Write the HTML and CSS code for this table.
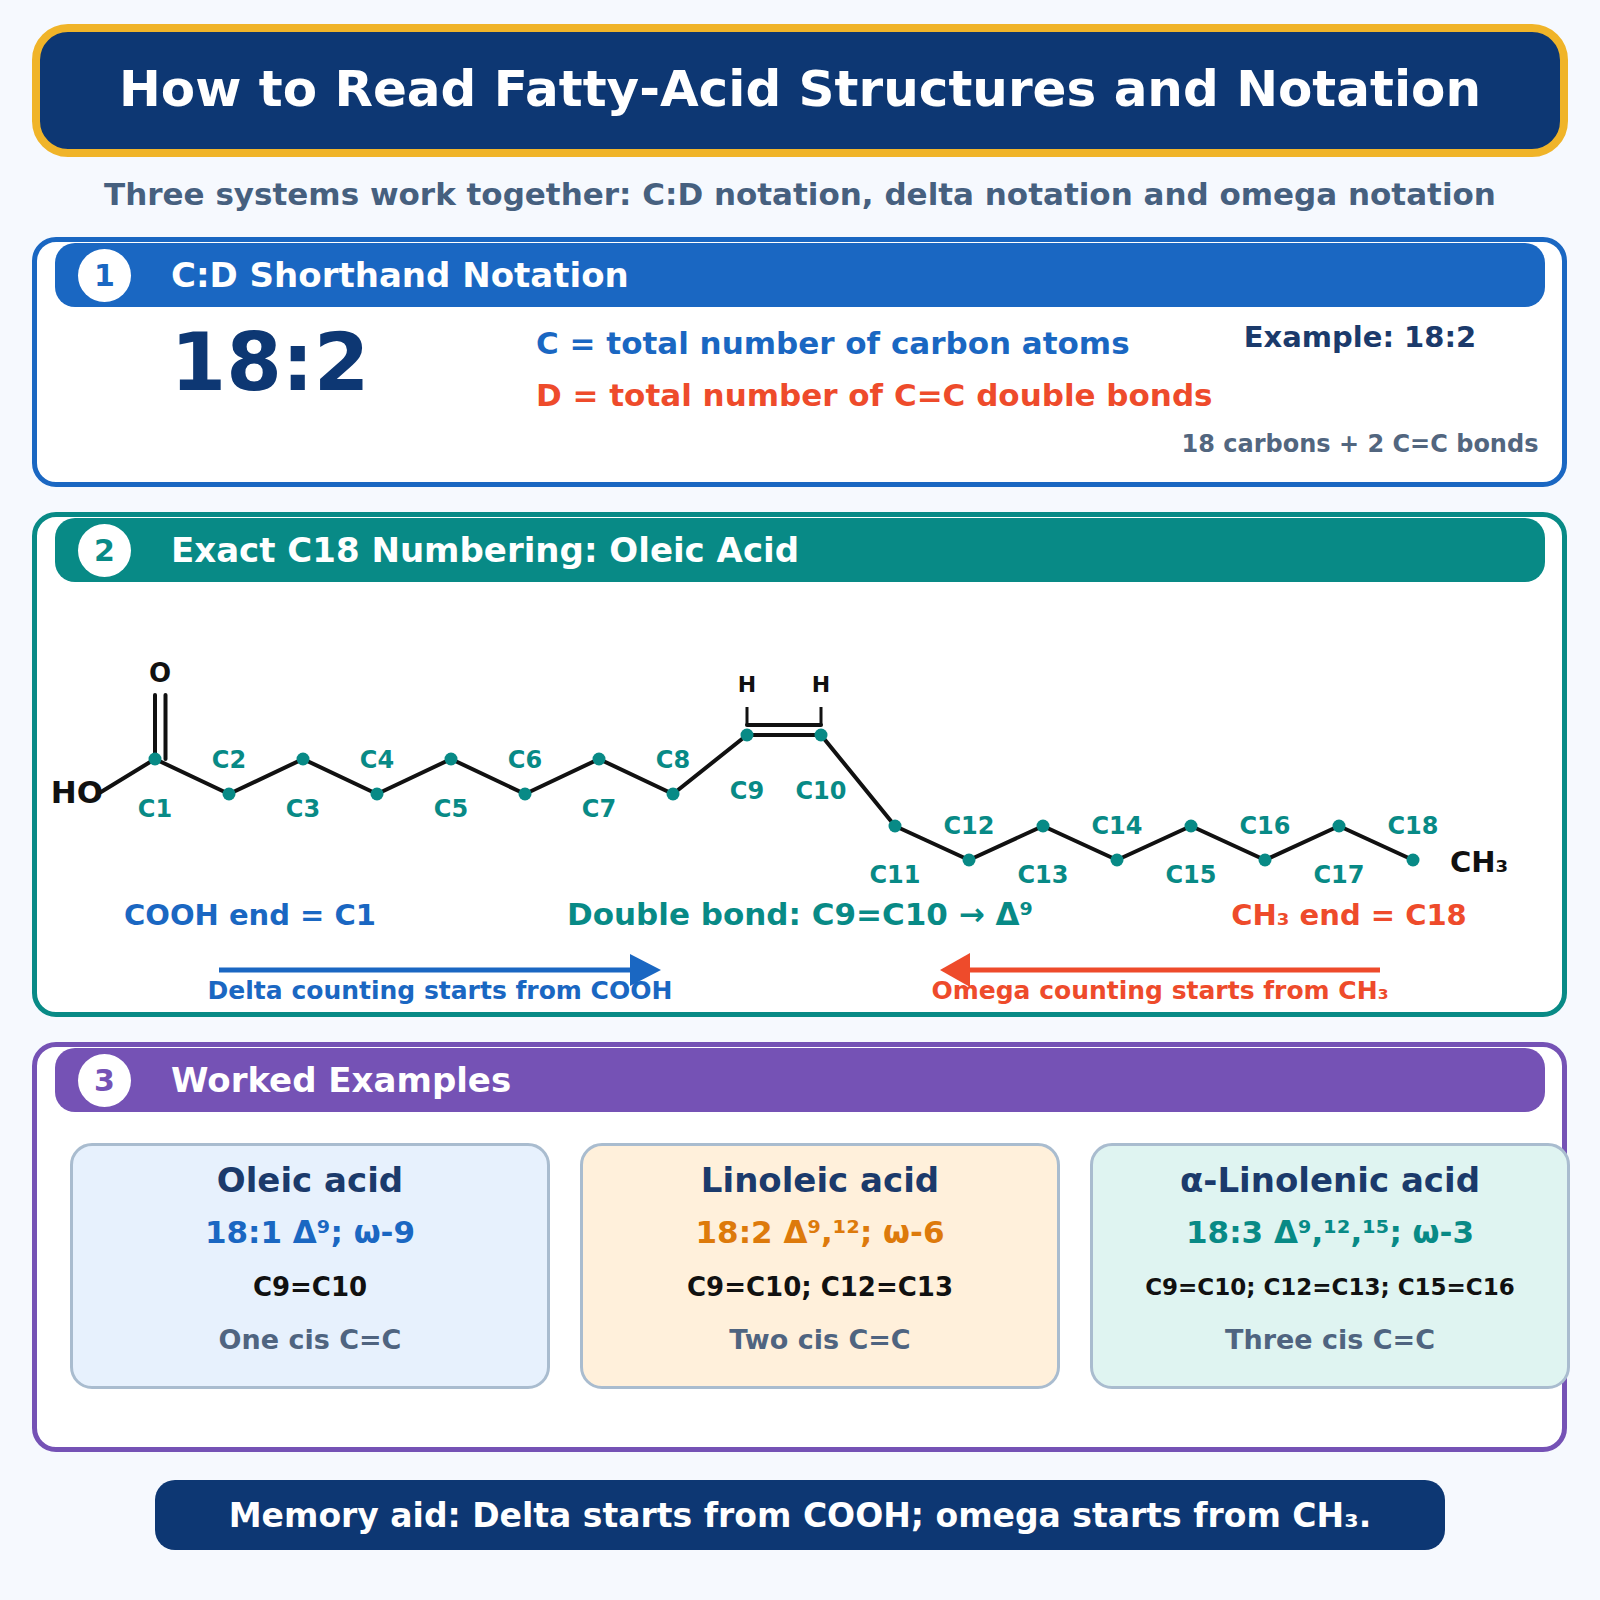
FILE: index.html
```html
<!DOCTYPE html>
<html lang="en">
<head>
<meta charset="utf-8">
<title>How to Read Fatty-Acid Structures and Notation</title>
<link rel="stylesheet" href="styles.css">
</head>
<body>
<div class="page">
  <header class="header">
    <h1>How to Read Fatty-Acid Structures and Notation</h1>
  </header>
  <p class="subtitle">Three systems work together: C:D notation, delta notation and omega notation</p>

  <section class="section s1">
    <div class="bar bar-blue"><span class="num num-blue">1</span>C:D Shorthand Notation</div>
    <div class="s1-body">
      <div class="big">18:2</div>
      <div class="defs">
        <div class="def def-c">C = total number of carbon atoms</div>
        <div class="def def-d">D = total number of C=C double bonds</div>
      </div>
      <div class="example">
        <div class="ex-title">Example: 18:2</div>
        <div class="ex-note">18 carbons + 2 C=C bonds</div>
      </div>
    </div>
  </section>

  <section class="section s2">
    <div class="bar bar-teal"><span class="num num-teal">2</span>Exact C18 Numbering: Oleic Acid</div>
    <svg class="chain" viewBox="37 582 1525 430" width="1525" height="430" xmlns="http://www.w3.org/2000/svg">
      <polyline class="bond" points="101,792 155,759 229,794 303,759 377,794 451,759 525,794 599,759 673,794 747,735 821,735 895,826 969,860 1043,826 1117,860 1191,826 1265,860 1339,826 1413,860"/>
      <line class="bond" x1="155" y1="759" x2="155" y2="695"/>
      <line class="bond" x1="165.5" y1="759" x2="165.5" y2="695"/>
      <line class="bond" x1="747" y1="725" x2="821" y2="725"/>
      <line class="hbond" x1="747" y1="725" x2="747" y2="707"/>
      <line class="hbond" x1="821" y1="725" x2="821" y2="707"/>

      <g class="dots">
        <circle cx="155" cy="759" r="6.5"/>
        <circle cx="229" cy="794" r="6.5"/>
        <circle cx="303" cy="759" r="6.5"/>
        <circle cx="377" cy="794" r="6.5"/>
        <circle cx="451" cy="759" r="6.5"/>
        <circle cx="525" cy="794" r="6.5"/>
        <circle cx="599" cy="759" r="6.5"/>
        <circle cx="673" cy="794" r="6.5"/>
        <circle cx="747" cy="735" r="6.5"/>
        <circle cx="821" cy="735" r="6.5"/>
        <circle cx="895" cy="826" r="6.5"/>
        <circle cx="969" cy="860" r="6.5"/>
        <circle cx="1043" cy="826" r="6.5"/>
        <circle cx="1117" cy="860" r="6.5"/>
        <circle cx="1191" cy="826" r="6.5"/>
        <circle cx="1265" cy="860" r="6.5"/>
        <circle cx="1339" cy="826" r="6.5"/>
        <circle cx="1413" cy="860" r="6.5"/>
      </g>

      <text class="atom atom-lg end" x="103" y="803">HO</text>
      <text class="atom atom-o mid" x="160" y="682">O</text>
      <text class="atom atom-h mid" x="747" y="692">H</text>
      <text class="atom atom-h mid" x="821" y="692">H</text>
      <text class="atom atom-ch3" x="1450" y="872">CH₃</text>

      <g class="lbl">
        <text x="155" y="817">C1</text>
        <text x="229" y="768">C2</text>
        <text x="303" y="817">C3</text>
        <text x="377" y="768">C4</text>
        <text x="451" y="817">C5</text>
        <text x="525" y="768">C6</text>
        <text x="599" y="817">C7</text>
        <text x="673" y="768">C8</text>
        <text x="747" y="799">C9</text>
        <text x="821" y="799">C10</text>
        <text x="895" y="883">C11</text>
        <text x="969" y="834">C12</text>
        <text x="1043" y="883">C13</text>
        <text x="1117" y="834">C14</text>
        <text x="1191" y="883">C15</text>
        <text x="1265" y="834">C16</text>
        <text x="1339" y="883">C17</text>
        <text x="1413" y="834">C18</text>
      </g>

      <text class="note note-blue" x="250" y="925">COOH end = C1</text>
      <text class="note note-wide note-teal" x="800" y="925">Double bond: C9=C10 → Δ⁹</text>
      <text class="note note-red" x="1349" y="925">CH₃ end = C18</text>

      <text class="count count-blue" x="440" y="999">Delta counting starts from COOH</text>
      <text class="count count-red" x="1160" y="999">Omega counting starts from CH₃</text>

      <line class="arrow-blue" x1="219" y1="970" x2="632" y2="970"/>
      <polygon class="head-blue" points="630,954 661,970 630,986"/>
      <line class="arrow-red" x1="1380" y1="970" x2="968" y2="970"/>
      <polygon class="head-red" points="970,953 940,970 970,987"/>
    </svg>
  </section>

  <section class="section s3">
    <div class="bar bar-purple"><span class="num num-purple">3</span>Worked Examples</div>
    <div class="cards">
      <div class="card card-blue">
        <div class="c-title">Oleic acid</div>
        <div class="c-note note-c1">18:1 Δ⁹; ω-9</div>
        <div class="c-bonds">C9=C10</div>
        <div class="c-desc">One cis C=C</div>
      </div>
      <div class="card card-orange">
        <div class="c-title">Linoleic acid</div>
        <div class="c-note note-c2">18:2 Δ⁹,¹²; ω-6</div>
        <div class="c-bonds">C9=C10; C12=C13</div>
        <div class="c-desc">Two cis C=C</div>
      </div>
      <div class="card card-teal">
        <div class="c-title">α-Linolenic acid</div>
        <div class="c-note note-c3">18:3 Δ⁹,¹²,¹⁵; ω-3</div>
        <div class="c-bonds c-bonds-sm">C9=C10; C12=C13; C15=C16</div>
        <div class="c-desc">Three cis C=C</div>
      </div>
    </div>
  </section>

  <footer class="footer">Memory aid: Delta starts from COOH; omega starts from CH₃.</footer>
</div>
</body>
</html>
```

FILE: styles.css
```css
html, body {
  margin: 0;
  padding: 0;
  background: #F6F9FE;
}

body {
  font-family: "DejaVu Sans", "Liberation Sans", sans-serif;
  font-weight: bold;
}

.page {
  width: 1600px;
  padding-top: 24px;
}

/* Title banner */
.header {
  margin: 0 32px;
  height: 133px;
  box-sizing: border-box;
  border: 8px solid #F0B429;
  border-radius: 36px;
  background: #0D3773;
  display: flex;
  align-items: center;
  justify-content: center;
  padding-bottom: 4px;
}

.header h1 {
  margin: 0;
  font-size: 50px;
  line-height: 1;
  color: #FFFFFF;
  font-weight: bold;
}

.subtitle {
  margin: 0 0 5px;
  text-align: center;
  font-size: 31px;
  line-height: 75px;
  color: #46607F;
}

/* Sections */
.section {
  margin: 0 0 25px 32px;
  width: 1535px;
  box-sizing: border-box;
  border: 5px solid;
  border-radius: 24px;
  background: #FFFFFF;
  overflow: visible;
}

.s1 { border-color: #1A67C2; height: 250px; }
.s2 { border-color: #088A86; height: 505px; }
.s3 { border-color: #7552B5; height: 410px; margin-bottom: 28px; }

.bar {
  margin: 1px 17px 0 18px;
  height: 64px;
  border-radius: 20px;
  display: flex;
  align-items: center;
  padding-left: 23px;
  color: #FFFFFF;
  font-size: 34px;
}

.bar-blue { background: #1A67C2; }
.bar-teal { background: #088A86; }
.bar-purple { background: #7552B5; }

.num {
  width: 53px;
  height: 53px;
  border-radius: 50%;
  background: #FFFFFF;
  display: flex;
  align-items: center;
  justify-content: center;
  font-size: 30px;
  margin-right: 40px;
  flex: none;
}

.num-blue { color: #1A67C2; }
.num-teal { color: #088A86; }
.num-purple { color: #7552B5; }

/* Section 1 */
.s1-body {
  display: grid;
  grid-template-columns: 499px 644px 360px;
}

.big {
  padding: 16px 33px 0 0;
  text-align: center;
  font-size: 80px;
  line-height: 80px;
  color: #0D3773;
}

.defs {
  padding-top: 10px;
}

.def {
  font-size: 31px;
  line-height: 52px;
  white-space: nowrap;
}

.def-c { color: #1A67C2; }
.def-d { color: #EE4B2B; }

.example {
  padding-top: 12px;
  text-align: center;
}

.ex-title {
  font-size: 29px;
  line-height: 36px;
  color: #1B3A6B;
}

.ex-note {
  margin-top: 74px;
  font-size: 24px;
  line-height: 30px;
  color: #52667F;
  white-space: nowrap;
}

/* Section 2 diagram */
.chain {
  display: block;
}

.bond {
  fill: none;
  stroke: #111111;
  stroke-width: 4;
  stroke-linejoin: round;
  stroke-linecap: round;
}

.hbond {
  stroke: #111111;
  stroke-width: 3;
}

.dots circle { fill: #088A86; }

.atom {
  font-family: "DejaVu Sans", sans-serif;
  font-weight: bold;
  fill: #111111;
}

.atom-lg { font-size: 31px; }
.atom-o { font-size: 26px; }
.atom-h { font-size: 22px; }
.atom-ch3 { font-size: 29px; }

.end { text-anchor: end; }
.mid { text-anchor: middle; }

.lbl text {
  font-family: "DejaVu Sans", sans-serif;
  font-weight: bold;
  font-size: 24px;
  fill: #088A86;
  text-anchor: middle;
}

.note {
  font-family: "DejaVu Sans", sans-serif;
  font-weight: bold;
  font-size: 29px;
  text-anchor: middle;
}

.note-wide { font-size: 31px; }

.note-blue { fill: #1A67C2; }
.note-teal { fill: #088A86; }
.note-red { fill: #EE4B2B; }

.count {
  font-family: "DejaVu Sans", sans-serif;
  font-weight: bold;
  font-size: 25px;
  text-anchor: middle;
}

.count-blue { fill: #1A67C2; }
.count-red { fill: #EE4B2B; }

.arrow-blue { stroke: #1A67C2; stroke-width: 5; }
.arrow-red { stroke: #EE4B2B; stroke-width: 5; }
.head-blue { fill: #1A67C2; }
.head-red { fill: #EE4B2B; }

/* Section 3 cards */
.cards {
  display: grid;
  grid-template-columns: repeat(3, 480px);
  column-gap: 30px;
  margin: 31px 0 0 33px;
}

.card {
  position: relative;
  height: 246px;
  box-sizing: border-box;
  border: 3px solid #A9BCCF;
  border-radius: 22px;
  padding-top: 8px;
  text-align: center;
}

.card-blue { background: #E7F1FD; }
.card-orange { background: #FFF0DB; }
.card-teal { background: #DFF4F1; }

.c-title {
  font-size: 34px;
  line-height: 52px;
  color: #1B3A6B;
  white-space: nowrap;
}

.c-note {
  font-size: 31px;
  line-height: 52px;
  white-space: nowrap;
}

.note-c1 { color: #1A67C2; }
.note-c2 { color: #DD7A0B; }
.note-c3 { color: #088A86; }

.c-bonds {
  font-size: 26px;
  line-height: 59px;
  color: #111111;
  white-space: nowrap;
}

.c-bonds-sm { font-size: 23px; }

.c-desc {
  font-size: 27px;
  line-height: 46px;
  color: #4F6480;
}

/* Footer */
.footer {
  margin-left: 155px;
  width: 1290px;
  height: 70px;
  border-radius: 20px;
  background: #0D3773;
  color: #FFFFFF;
  font-size: 33px;
  display: flex;
  align-items: center;
  justify-content: center;
  white-space: nowrap;
}
```
